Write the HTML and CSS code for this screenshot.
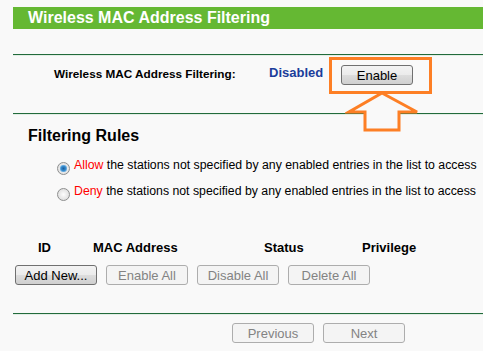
FILE: index.html
```
<html>
<head>
<title>Wireless MAC Address Filtering</title>
<meta charset='utf-8'/>
<link rel="stylesheet" href="styles.css">
</head>
<body>
<div class='page'>
<div class='title'>Wireless MAC Address Filtering</div>
<div class='section status-row'>
<span class='label'>Wireless MAC Address Filtering:</span>
<span class='state'>Disabled</span>
<button class='btn'>Enable</button>
</div>
<div class='section rules'>
<h3>Filtering Rules</h3>
<label class='rule'><input type='radio' name='rule' checked /><span><em>Allow</em> the stations not specified by any enabled entries in the list to access</span></label>
<label class='rule'><input type='radio' name='rule' /><span><em>Deny</em> the stations not specified by any enabled entries in the list to access</span></label>
<div class='thead'>
<span>ID</span><span>MAC Address</span><span>Status</span><span>Privilege</span>
</div>
<div class='actions'>
<button class='btn wide'>Add New...</button>
<button class='btn wide' disabled>Enable All</button>
<button class='btn wide' disabled>Disable All</button>
<button class='btn wide' disabled>Delete All</button>
</div>
</div>
<div class='section pager'>
<button class='btn wide' disabled>Previous</button>
<button class='btn wide' disabled>Next</button>
</div>
</div>
<div class='mark'></div>
<svg class='arrow' width='76' height='46' viewBox='345 89 76 46'>
<polygon points='382,93 417,112 399,112 399,130 365,130 365,112 349,112' fill='#f9f9f9' stroke='#fd7f25' stroke-width='3'/>
</svg>
</body>
</html>
```
FILE: styles.css
```
body {
	margin: 0;
	background: #f9f9f9;
	font-family: "Liberation Sans", Arial, sans-serif;
	color: #000;
}
.page {
	padding: 7px 0 0 13px;
}
.title {
	height: 22px;
	line-height: 22px;
	padding-left: 15px;
	background: #65b833;
	color: #fff;
	font-size: 16px;
	font-weight: bold;
}
.section {
	border-top: 1px solid #226b3b;
	box-shadow: inset 0 1px 0 #e2eee5;
}
.status-row {
	margin-top: 25px;
	display: flex;
	align-items: flex-start;
	padding-top: 10px;
	box-sizing: border-box;
	height: 59px;
}
.label {
	width: 215px;
	padding-left: 41px;
	font-size: 11.75px;
	font-weight: bold;
	line-height: 20px;
	margin-top: -1px;
}
.state {
	width: 72px;
	color: #1b3d9b;
	font-size: 13px;
	font-weight: bold;
	line-height: 20px;
	margin-top: -2px;
}
.btn {
	font-family: "Liberation Sans", Arial, sans-serif;
	font-size: 13px;
	height: 20px;
	width: 72px;
	padding: 0;
	color: #000;
	border: 1px solid #707070;
	border-radius: 3px;
	background: linear-gradient(#f3f3f3, #ebebeb 50%, #dddddd 51%, #cfcfcf);
}
.btn.wide {
	width: 82px;
}
.btn[disabled] {
	color: #838383;
	border-color: #adadad;
	background: #f4f4f4;
}
.rules h3 {
	margin: 12px 0 10px 15px;
	font-size: 16px;
	line-height: 19px;
}
.rule {
	display: flex;
	align-items: center;
	height: 26px;
	margin-left: 44px;
	font-size: 12.3px;
}
.rule span {
	margin-top: -6px;
}
.rule em {
	font-style: normal;
	color: #f00;
}
.rule input {
	-webkit-appearance: none;
	appearance: none;
	width: 13px;
	height: 13px;
	margin: 0 4px 0 0;
	border: 1px solid #8e8f8f;
	border-radius: 50%;
	background: radial-gradient(#fdfdfd, #d6d6d6);
	box-sizing: border-box;
}
.rule input:checked {
	background: radial-gradient(circle, #1d5f9e 0, #3a8fd0 2.5px, #8cc0e8 3.5px, #e8e8e8 4px, #dcdcdc);
}
.thead {
	display: grid;
	grid-template-columns: 55px 171px 98px auto;
	padding-left: 25px;
	margin-top: 33px;
	font-size: 13px;
	font-weight: bold;
	line-height: 16px;
}
.actions {
	display: flex;
	gap: 9px;
	padding-left: 2px;
	margin-top: 9px;
	height: 48px;
}
.pager {
	display: flex;
	gap: 9px;
	padding: 9px 0 0 219px;
}
.mark {
	position: absolute;
	left: 329px;
	top: 57px;
	width: 97px;
	height: 31px;
	border: 3px solid #fd7f25;
}
.arrow {
	position: absolute;
	left: 345px;
	top: 89px;
}
```
